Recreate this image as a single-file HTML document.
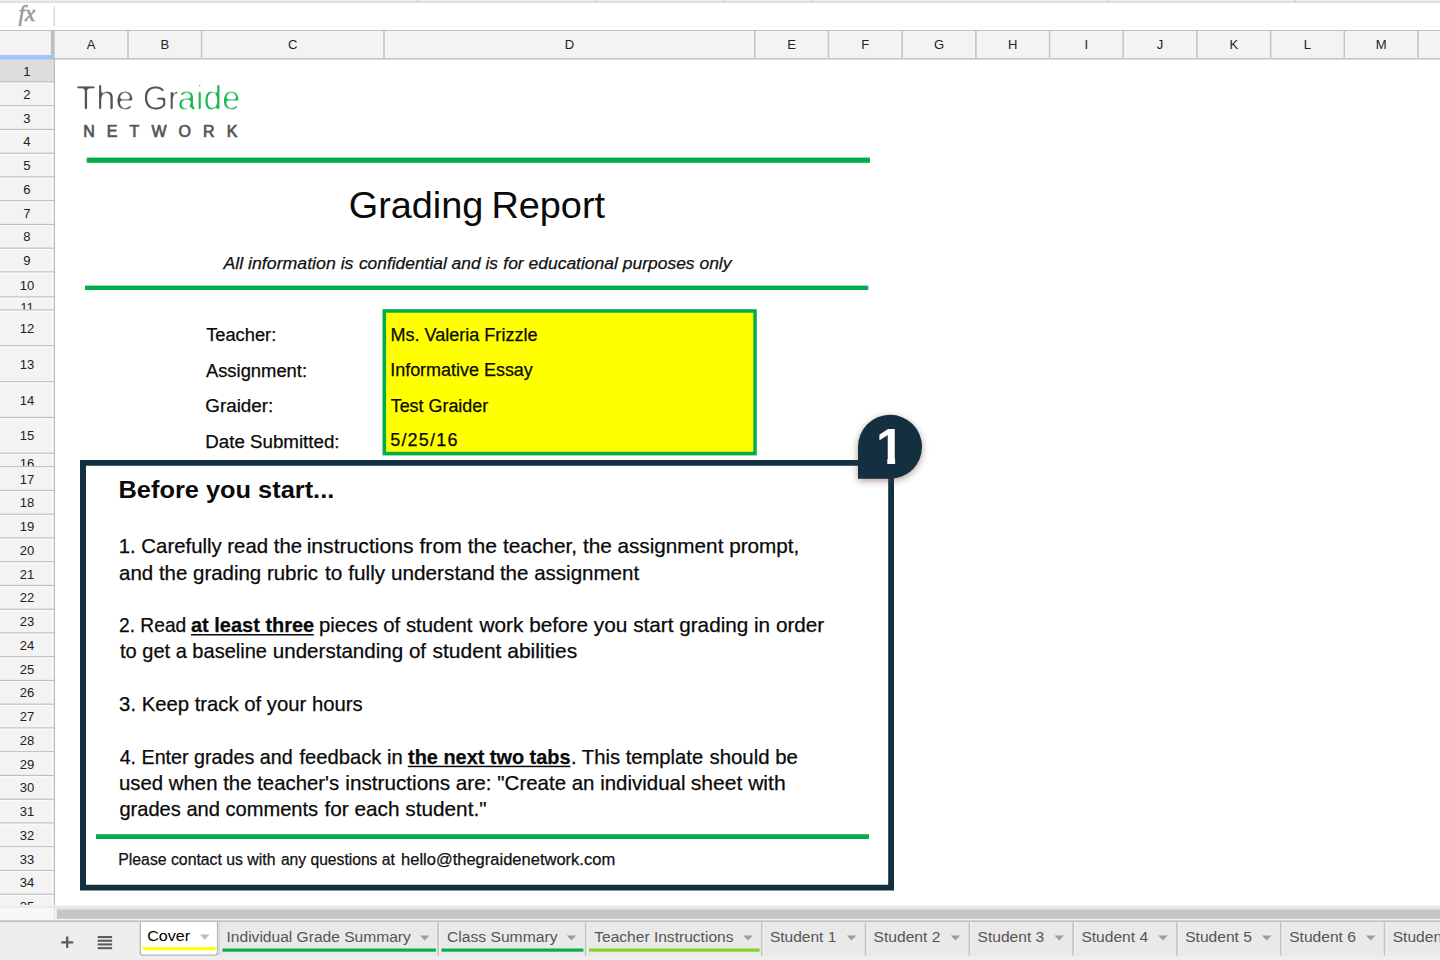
<!DOCTYPE html>
<html lang="en"><head><meta charset="utf-8"><title>Grading Report - Cover</title>
<style>html,body{margin:0;padding:0;background:#fff;overflow:hidden}body{width:1440px;height:960px;position:relative}body>svg{position:absolute;left:0;top:0;display:block}svg{font-family:'Liberation Sans', sans-serif}text{white-space:pre}</style></head><body>
<svg width="1440" height="960" viewBox="0 0 1440 960">
<defs><filter id="sh" x="-40%" y="-40%" width="180%" height="180%" color-interpolation-filters="sRGB"><feGaussianBlur in="SourceAlpha" stdDeviation="3.6"/><feOffset dx="0" dy="2"/><feColorMatrix type="matrix" values="0 0 0 0 0.36  0 0 0 0 0.20  0 0 0 0 0.16  0 0 0 0.5 0"/><feMerge><feMergeNode/><feMergeNode in="SourceGraphic"/></feMerge></filter><filter id="thin" x="-5%" y="-20%" width="110%" height="140%" color-interpolation-filters="sRGB"><feGaussianBlur stdDeviation="0.8"/><feComponentTransfer><feFuncA type="linear" slope="4" intercept="-2.0"/></feComponentTransfer></filter></defs>
<rect width="1440" height="960" fill="#fff"/>
<rect x="0" y="0" width="1440" height="2.6" fill="#ececec"/>
<rect x="0" y="1.6" width="1440" height="1.1" fill="#d6d6d6"/>
<rect x="416.59999999999997" y="0" width="1.2" height="1.8" fill="#cfcfcf"/>
<rect x="595.4" y="0" width="1.2" height="1.8" fill="#cfcfcf"/>
<rect x="724.4" y="0" width="1.2" height="1.8" fill="#cfcfcf"/>
<rect x="811.1" y="0" width="1.2" height="1.8" fill="#cfcfcf"/>
<rect x="1108.4" y="0" width="1.2" height="1.8" fill="#cfcfcf"/>
<rect x="1294.4" y="0" width="1.2" height="1.8" fill="#cfcfcf"/>
<text x="18.6" y="20.8" font-family="'Liberation Serif', serif" font-style="italic" font-size="23.4" fill="#999" stroke="#999" stroke-width="0.6" textLength="16.6" lengthAdjust="spacingAndGlyphs">fx</text>
<rect x="53.6" y="6.2" width="1.2" height="20.2" fill="#d0d0d0"/>
<rect x="0" y="30" width="1440" height="29" fill="#f3f3f3"/>
<rect x="0" y="30" width="1440" height="1.25" fill="#bebebe"/>
<rect x="0" y="31.25" width="1440" height="1" fill="#fafafa"/>
<rect x="54" y="58.1" width="1386" height="1.4" fill="#bebebe"/>
<text x="91.20" y="49.2" font-size="13.06" fill="#222" text-anchor="middle">A</text>
<rect x="126.50" y="31.25" width="3" height="26.9" fill="#fafafa"/>
<rect x="127.15" y="31" width="1.7" height="27.2" fill="#c4c4c4"/>
<text x="164.80" y="49.2" font-size="13.06" fill="#222" text-anchor="middle">B</text>
<rect x="200.10" y="31.25" width="3" height="26.9" fill="#fafafa"/>
<rect x="200.75" y="31" width="1.7" height="27.2" fill="#c4c4c4"/>
<text x="292.80" y="49.2" font-size="13.06" fill="#222" text-anchor="middle">C</text>
<rect x="382.50" y="31.25" width="3" height="26.9" fill="#fafafa"/>
<rect x="383.15" y="31" width="1.7" height="27.2" fill="#c4c4c4"/>
<text x="569.40" y="49.2" font-size="13.06" fill="#222" text-anchor="middle">D</text>
<rect x="753.30" y="31.25" width="3" height="26.9" fill="#fafafa"/>
<rect x="753.95" y="31" width="1.7" height="27.2" fill="#c4c4c4"/>
<text x="791.65" y="49.2" font-size="13.06" fill="#222" text-anchor="middle">E</text>
<rect x="827.00" y="31.25" width="3" height="26.9" fill="#fafafa"/>
<rect x="827.65" y="31" width="1.7" height="27.2" fill="#c4c4c4"/>
<text x="865.35" y="49.2" font-size="13.06" fill="#222" text-anchor="middle">F</text>
<rect x="900.70" y="31.25" width="3" height="26.9" fill="#fafafa"/>
<rect x="901.35" y="31" width="1.7" height="27.2" fill="#c4c4c4"/>
<text x="939.05" y="49.2" font-size="13.06" fill="#222" text-anchor="middle">G</text>
<rect x="974.40" y="31.25" width="3" height="26.9" fill="#fafafa"/>
<rect x="975.05" y="31" width="1.7" height="27.2" fill="#c4c4c4"/>
<text x="1012.75" y="49.2" font-size="13.06" fill="#222" text-anchor="middle">H</text>
<rect x="1048.10" y="31.25" width="3" height="26.9" fill="#fafafa"/>
<rect x="1048.75" y="31" width="1.7" height="27.2" fill="#c4c4c4"/>
<text x="1086.40" y="49.2" font-size="13.06" fill="#222" text-anchor="middle">I</text>
<rect x="1121.70" y="31.25" width="3" height="26.9" fill="#fafafa"/>
<rect x="1122.35" y="31" width="1.7" height="27.2" fill="#c4c4c4"/>
<text x="1160.05" y="49.2" font-size="13.06" fill="#222" text-anchor="middle">J</text>
<rect x="1195.40" y="31.25" width="3" height="26.9" fill="#fafafa"/>
<rect x="1196.05" y="31" width="1.7" height="27.2" fill="#c4c4c4"/>
<text x="1233.75" y="49.2" font-size="13.06" fill="#222" text-anchor="middle">K</text>
<rect x="1269.10" y="31.25" width="3" height="26.9" fill="#fafafa"/>
<rect x="1269.75" y="31" width="1.7" height="27.2" fill="#c4c4c4"/>
<text x="1307.45" y="49.2" font-size="13.06" fill="#222" text-anchor="middle">L</text>
<rect x="1342.80" y="31.25" width="3" height="26.9" fill="#fafafa"/>
<rect x="1343.45" y="31" width="1.7" height="27.2" fill="#c4c4c4"/>
<text x="1381.15" y="49.2" font-size="13.06" fill="#222" text-anchor="middle">M</text>
<rect x="1416.50" y="31.25" width="3" height="26.9" fill="#fafafa"/>
<rect x="1417.15" y="31" width="1.7" height="27.2" fill="#c4c4c4"/>
<rect x="0" y="59" width="54" height="846.5" fill="#f3f3f3"/>
<rect x="0" y="59.5" width="54" height="22.5" fill="#dddddd"/>
<rect x="51.9" y="59.5" width="2" height="22.5" fill="#e2e2e2"/>
<rect x="51.9" y="82.6" width="1.9" height="823" fill="#fbfbfb"/>
<svg x="0" y="59.50" width="54" height="22.50" overflow="hidden"><text x="27" y="16.25" font-size="13.06" fill="#222" text-anchor="middle">1</text></svg>
<rect x="0" y="81.35" width="54" height="1.3" fill="#bfbfbf"/>
<rect x="0" y="82.65" width="53.6" height="1.1" fill="#fcfcfc"/>
<svg x="0" y="82.00" width="54" height="23.75" overflow="hidden"><text x="27" y="16.88" font-size="13.06" fill="#222" text-anchor="middle">2</text></svg>
<rect x="0" y="105.10" width="54" height="1.3" fill="#bfbfbf"/>
<rect x="0" y="106.40" width="53.6" height="1.1" fill="#fcfcfc"/>
<svg x="0" y="105.75" width="54" height="23.75" overflow="hidden"><text x="27" y="16.88" font-size="13.06" fill="#222" text-anchor="middle">3</text></svg>
<rect x="0" y="128.85" width="54" height="1.3" fill="#bfbfbf"/>
<rect x="0" y="130.15" width="53.6" height="1.1" fill="#fcfcfc"/>
<svg x="0" y="129.50" width="54" height="23.75" overflow="hidden"><text x="27" y="16.88" font-size="13.06" fill="#222" text-anchor="middle">4</text></svg>
<rect x="0" y="152.60" width="54" height="1.3" fill="#bfbfbf"/>
<rect x="0" y="153.90" width="53.6" height="1.1" fill="#fcfcfc"/>
<svg x="0" y="153.25" width="54" height="23.75" overflow="hidden"><text x="27" y="16.88" font-size="13.06" fill="#222" text-anchor="middle">5</text></svg>
<rect x="0" y="176.35" width="54" height="1.3" fill="#bfbfbf"/>
<rect x="0" y="177.65" width="53.6" height="1.1" fill="#fcfcfc"/>
<svg x="0" y="177.00" width="54" height="23.75" overflow="hidden"><text x="27" y="16.88" font-size="13.06" fill="#222" text-anchor="middle">6</text></svg>
<rect x="0" y="200.10" width="54" height="1.3" fill="#bfbfbf"/>
<rect x="0" y="201.40" width="53.6" height="1.1" fill="#fcfcfc"/>
<svg x="0" y="200.75" width="54" height="23.75" overflow="hidden"><text x="27" y="16.88" font-size="13.06" fill="#222" text-anchor="middle">7</text></svg>
<rect x="0" y="223.85" width="54" height="1.3" fill="#bfbfbf"/>
<rect x="0" y="225.15" width="53.6" height="1.1" fill="#fcfcfc"/>
<svg x="0" y="224.50" width="54" height="23.75" overflow="hidden"><text x="27" y="16.88" font-size="13.06" fill="#222" text-anchor="middle">8</text></svg>
<rect x="0" y="247.60" width="54" height="1.3" fill="#bfbfbf"/>
<rect x="0" y="248.90" width="53.6" height="1.1" fill="#fcfcfc"/>
<svg x="0" y="248.25" width="54" height="23.75" overflow="hidden"><text x="27" y="16.88" font-size="13.06" fill="#222" text-anchor="middle">9</text></svg>
<rect x="0" y="271.35" width="54" height="1.3" fill="#bfbfbf"/>
<rect x="0" y="272.65" width="53.6" height="1.1" fill="#fcfcfc"/>
<svg x="0" y="272.00" width="54" height="25.00" overflow="hidden"><text x="27" y="17.50" font-size="13.06" fill="#222" text-anchor="middle">10</text></svg>
<rect x="0" y="296.35" width="54" height="1.3" fill="#bfbfbf"/>
<rect x="0" y="297.65" width="53.6" height="1.1" fill="#fcfcfc"/>
<svg x="0" y="297.00" width="54" height="13.00" overflow="hidden"><text x="27" y="14.80" font-size="13.06" fill="#222" text-anchor="middle">11</text></svg>
<rect x="0" y="309.35" width="54" height="1.3" fill="#bfbfbf"/>
<rect x="0" y="310.65" width="53.6" height="1.1" fill="#fcfcfc"/>
<svg x="0" y="310.00" width="54" height="35.75" overflow="hidden"><text x="27" y="22.88" font-size="13.06" fill="#222" text-anchor="middle">12</text></svg>
<rect x="0" y="345.10" width="54" height="1.3" fill="#bfbfbf"/>
<rect x="0" y="346.40" width="53.6" height="1.1" fill="#fcfcfc"/>
<svg x="0" y="345.75" width="54" height="36.00" overflow="hidden"><text x="27" y="23.00" font-size="13.06" fill="#222" text-anchor="middle">13</text></svg>
<rect x="0" y="381.10" width="54" height="1.3" fill="#bfbfbf"/>
<rect x="0" y="382.40" width="53.6" height="1.1" fill="#fcfcfc"/>
<svg x="0" y="381.75" width="54" height="35.75" overflow="hidden"><text x="27" y="22.88" font-size="13.06" fill="#222" text-anchor="middle">14</text></svg>
<rect x="0" y="416.85" width="54" height="1.3" fill="#bfbfbf"/>
<rect x="0" y="418.15" width="53.6" height="1.1" fill="#fcfcfc"/>
<svg x="0" y="417.50" width="54" height="35.75" overflow="hidden"><text x="27" y="22.88" font-size="13.06" fill="#222" text-anchor="middle">15</text></svg>
<rect x="0" y="452.60" width="54" height="1.3" fill="#bfbfbf"/>
<rect x="0" y="453.90" width="53.6" height="1.1" fill="#fcfcfc"/>
<svg x="0" y="453.25" width="54" height="13.50" overflow="hidden"><text x="27" y="14.80" font-size="13.06" fill="#222" text-anchor="middle">16</text></svg>
<rect x="0" y="466.10" width="54" height="1.3" fill="#bfbfbf"/>
<rect x="0" y="467.40" width="53.6" height="1.1" fill="#fcfcfc"/>
<svg x="0" y="466.75" width="54" height="23.75" overflow="hidden"><text x="27" y="16.88" font-size="13.06" fill="#222" text-anchor="middle">17</text></svg>
<rect x="0" y="489.85" width="54" height="1.3" fill="#bfbfbf"/>
<rect x="0" y="491.15" width="53.6" height="1.1" fill="#fcfcfc"/>
<svg x="0" y="490.50" width="54" height="23.75" overflow="hidden"><text x="27" y="16.88" font-size="13.06" fill="#222" text-anchor="middle">18</text></svg>
<rect x="0" y="513.60" width="54" height="1.3" fill="#bfbfbf"/>
<rect x="0" y="514.90" width="53.6" height="1.1" fill="#fcfcfc"/>
<svg x="0" y="514.25" width="54" height="23.75" overflow="hidden"><text x="27" y="16.88" font-size="13.06" fill="#222" text-anchor="middle">19</text></svg>
<rect x="0" y="537.35" width="54" height="1.3" fill="#bfbfbf"/>
<rect x="0" y="538.65" width="53.6" height="1.1" fill="#fcfcfc"/>
<svg x="0" y="538.00" width="54" height="23.75" overflow="hidden"><text x="27" y="16.88" font-size="13.06" fill="#222" text-anchor="middle">20</text></svg>
<rect x="0" y="561.10" width="54" height="1.3" fill="#bfbfbf"/>
<rect x="0" y="562.40" width="53.6" height="1.1" fill="#fcfcfc"/>
<svg x="0" y="561.75" width="54" height="23.75" overflow="hidden"><text x="27" y="16.88" font-size="13.06" fill="#222" text-anchor="middle">21</text></svg>
<rect x="0" y="584.85" width="54" height="1.3" fill="#bfbfbf"/>
<rect x="0" y="586.15" width="53.6" height="1.1" fill="#fcfcfc"/>
<svg x="0" y="585.50" width="54" height="23.75" overflow="hidden"><text x="27" y="16.88" font-size="13.06" fill="#222" text-anchor="middle">22</text></svg>
<rect x="0" y="608.60" width="54" height="1.3" fill="#bfbfbf"/>
<rect x="0" y="609.90" width="53.6" height="1.1" fill="#fcfcfc"/>
<svg x="0" y="609.25" width="54" height="23.75" overflow="hidden"><text x="27" y="16.88" font-size="13.06" fill="#222" text-anchor="middle">23</text></svg>
<rect x="0" y="632.35" width="54" height="1.3" fill="#bfbfbf"/>
<rect x="0" y="633.65" width="53.6" height="1.1" fill="#fcfcfc"/>
<svg x="0" y="633.00" width="54" height="23.75" overflow="hidden"><text x="27" y="16.88" font-size="13.06" fill="#222" text-anchor="middle">24</text></svg>
<rect x="0" y="656.10" width="54" height="1.3" fill="#bfbfbf"/>
<rect x="0" y="657.40" width="53.6" height="1.1" fill="#fcfcfc"/>
<svg x="0" y="656.75" width="54" height="23.75" overflow="hidden"><text x="27" y="16.88" font-size="13.06" fill="#222" text-anchor="middle">25</text></svg>
<rect x="0" y="679.85" width="54" height="1.3" fill="#bfbfbf"/>
<rect x="0" y="681.15" width="53.6" height="1.1" fill="#fcfcfc"/>
<svg x="0" y="680.50" width="54" height="23.75" overflow="hidden"><text x="27" y="16.88" font-size="13.06" fill="#222" text-anchor="middle">26</text></svg>
<rect x="0" y="703.60" width="54" height="1.3" fill="#bfbfbf"/>
<rect x="0" y="704.90" width="53.6" height="1.1" fill="#fcfcfc"/>
<svg x="0" y="704.25" width="54" height="23.75" overflow="hidden"><text x="27" y="16.88" font-size="13.06" fill="#222" text-anchor="middle">27</text></svg>
<rect x="0" y="727.35" width="54" height="1.3" fill="#bfbfbf"/>
<rect x="0" y="728.65" width="53.6" height="1.1" fill="#fcfcfc"/>
<svg x="0" y="728.00" width="54" height="23.75" overflow="hidden"><text x="27" y="16.88" font-size="13.06" fill="#222" text-anchor="middle">28</text></svg>
<rect x="0" y="751.10" width="54" height="1.3" fill="#bfbfbf"/>
<rect x="0" y="752.40" width="53.6" height="1.1" fill="#fcfcfc"/>
<svg x="0" y="751.75" width="54" height="23.75" overflow="hidden"><text x="27" y="16.88" font-size="13.06" fill="#222" text-anchor="middle">29</text></svg>
<rect x="0" y="774.85" width="54" height="1.3" fill="#bfbfbf"/>
<rect x="0" y="776.15" width="53.6" height="1.1" fill="#fcfcfc"/>
<svg x="0" y="775.50" width="54" height="23.75" overflow="hidden"><text x="27" y="16.88" font-size="13.06" fill="#222" text-anchor="middle">30</text></svg>
<rect x="0" y="798.60" width="54" height="1.3" fill="#bfbfbf"/>
<rect x="0" y="799.90" width="53.6" height="1.1" fill="#fcfcfc"/>
<svg x="0" y="799.25" width="54" height="23.75" overflow="hidden"><text x="27" y="16.88" font-size="13.06" fill="#222" text-anchor="middle">31</text></svg>
<rect x="0" y="822.35" width="54" height="1.3" fill="#bfbfbf"/>
<rect x="0" y="823.65" width="53.6" height="1.1" fill="#fcfcfc"/>
<svg x="0" y="823.00" width="54" height="23.75" overflow="hidden"><text x="27" y="16.88" font-size="13.06" fill="#222" text-anchor="middle">32</text></svg>
<rect x="0" y="846.10" width="54" height="1.3" fill="#bfbfbf"/>
<rect x="0" y="847.40" width="53.6" height="1.1" fill="#fcfcfc"/>
<svg x="0" y="846.75" width="54" height="23.75" overflow="hidden"><text x="27" y="16.88" font-size="13.06" fill="#222" text-anchor="middle">33</text></svg>
<rect x="0" y="869.85" width="54" height="1.3" fill="#bfbfbf"/>
<rect x="0" y="871.15" width="53.6" height="1.1" fill="#fcfcfc"/>
<svg x="0" y="870.50" width="54" height="23.75" overflow="hidden"><text x="27" y="16.88" font-size="13.06" fill="#222" text-anchor="middle">34</text></svg>
<rect x="0" y="893.60" width="54" height="1.3" fill="#bfbfbf"/>
<rect x="0" y="894.90" width="53.6" height="1.1" fill="#fcfcfc"/>
<svg x="0" y="894.25" width="54" height="10.75" overflow="hidden"><text x="27" y="16.88" font-size="13.06" fill="#222" text-anchor="middle">35</text></svg>
<rect x="53.75" y="59" width="1.3" height="846" fill="#bdbdbd"/>
<rect x="50.9" y="31" width="3.7" height="28.5" fill="#bcbcbc"/>
<rect x="0" y="55" width="53.6" height="4.6" fill="#a3c2f7"/>
<rect x="86.7" y="157.6" width="783.3" height="5.2" fill="#04ad4b"/>
<rect x="85.0" y="285.6" width="783.3" height="4.4" fill="#04ad4b"/>
<rect x="382.5" y="309.2" width="374.3" height="146.2" fill="#04ad4b"/>
<rect x="386.1" y="312.7" width="367.2" height="139.1" fill="#ffff00"/>
<path fill="#143040" fill-rule="evenodd" d="M80 460H894V890.6H80Z M86 465.8H888.2V884.8H86Z"/>
<rect x="96" y="834.2" width="773" height="4.8" fill="#04ad4b"/>
<rect x="191.0" y="634.0" width="122.8" height="1.5" fill="#0a0a0a"/>
<rect x="407.8" y="765.7" width="162.6" height="1.5" fill="#0a0a0a"/>
<path filter="url(#sh)" fill="#143040" d="M858 478.8V447A32 32 0 1 1 890 478.8Z"/>
<text x="876.0" y="463.75" font-size="50.5" font-weight="bold" fill="#fff">1</text>
<rect x="877" y="456.6" width="10.3" height="9" fill="#143040"/>
<rect x="895.1" y="456.6" width="9" height="9" fill="#143040"/>
<text x="348.74" y="217.70" font-size="36.4" textLength="134.60" lengthAdjust="spacingAndGlyphs" fill="#0a0a0a">Grading</text>
<text x="491.40" y="217.70" font-size="36.4" textLength="113.68" lengthAdjust="spacingAndGlyphs" fill="#0a0a0a">Report</text>
<text x="223.45" y="269.30" font-size="17.4" textLength="130.05" lengthAdjust="spacingAndGlyphs" fill="#111" font-style="italic" stroke="#111" stroke-width="0.25">All information is</text>
<text x="358.88" y="269.30" font-size="17.4" textLength="139.10" lengthAdjust="spacingAndGlyphs" fill="#111" font-style="italic" stroke="#111" stroke-width="0.25">confidential and is</text>
<text x="503.29" y="269.30" font-size="17.4" textLength="228.22" lengthAdjust="spacingAndGlyphs" fill="#111" font-style="italic" stroke="#111" stroke-width="0.25">for educational purposes only</text>
<text x="206.15" y="340.80" font-size="18.0" textLength="70.11" lengthAdjust="spacingAndGlyphs" fill="#0a0a0a" stroke="#0a0a0a" stroke-width="0.25">Teacher:</text>
<text x="205.92" y="376.70" font-size="18.0" textLength="101.16" lengthAdjust="spacingAndGlyphs" fill="#0a0a0a" stroke="#0a0a0a" stroke-width="0.25">Assignment:</text>
<text x="205.31" y="412.00" font-size="18.0" textLength="68.01" lengthAdjust="spacingAndGlyphs" fill="#0a0a0a" stroke="#0a0a0a" stroke-width="0.25">Graider:</text>
<text x="205.22" y="447.50" font-size="18.0" textLength="134.37" lengthAdjust="spacingAndGlyphs" fill="#0a0a0a" stroke="#0a0a0a" stroke-width="0.25">Date Submitted:</text>
<text x="390.48" y="340.50" font-size="18.0" textLength="147.01" lengthAdjust="spacingAndGlyphs" fill="#0a0a0a" stroke="#0a0a0a" stroke-width="0.25">Ms. Valeria Frizzle</text>
<text x="390.19" y="376.30" font-size="18.0" textLength="142.63" lengthAdjust="spacingAndGlyphs" fill="#0a0a0a" stroke="#0a0a0a" stroke-width="0.25">Informative Essay</text>
<text x="390.69" y="412.00" font-size="18.0" textLength="97.55" lengthAdjust="spacingAndGlyphs" fill="#0a0a0a" stroke="#0a0a0a" stroke-width="0.25">Test Graider</text>
<text x="390.19" y="445.80" font-size="18.0" textLength="67.22" lengthAdjust="spacing" fill="#0a0a0a" stroke="#0a0a0a" stroke-width="0.25">5/25/16</text>
<text x="118.56" y="497.90" font-size="24.4" textLength="215.72" lengthAdjust="spacingAndGlyphs" fill="#0a0a0a" font-weight="bold">Before you start...</text>
<text x="118.74" y="553.30" font-size="20.4" textLength="183.30" lengthAdjust="spacingAndGlyphs" fill="#0a0a0a" stroke="#0a0a0a" stroke-width="0.25">1. Carefully read the</text>
<text x="306.65" y="553.30" font-size="20.4" textLength="190.40" lengthAdjust="spacingAndGlyphs" fill="#0a0a0a" stroke="#0a0a0a" stroke-width="0.25">instructions from the</text>
<text x="502.91" y="553.30" font-size="20.4" textLength="109.00" lengthAdjust="spacingAndGlyphs" fill="#0a0a0a" stroke="#0a0a0a" stroke-width="0.25">teacher, the</text>
<text x="617.45" y="553.30" font-size="20.4" textLength="181.95" lengthAdjust="spacingAndGlyphs" fill="#0a0a0a" stroke="#0a0a0a" stroke-width="0.25">assignment prompt,</text>
<text x="119.07" y="579.50" font-size="20.4" textLength="199.02" lengthAdjust="spacingAndGlyphs" fill="#0a0a0a" stroke="#0a0a0a" stroke-width="0.25">and the grading rubric</text>
<text x="325.10" y="579.50" font-size="20.4" textLength="169.78" lengthAdjust="spacingAndGlyphs" fill="#0a0a0a" stroke="#0a0a0a" stroke-width="0.25">to fully understand</text>
<text x="499.91" y="579.50" font-size="20.4" textLength="139.23" lengthAdjust="spacingAndGlyphs" fill="#0a0a0a" stroke="#0a0a0a" stroke-width="0.25">the assignment</text>
<text x="119.04" y="631.90" font-size="20.4" textLength="67.20" lengthAdjust="spacingAndGlyphs" fill="#0a0a0a" stroke="#0a0a0a" stroke-width="0.25">2. Read</text>
<text x="190.99" y="631.90" font-size="20.4" textLength="123.25" lengthAdjust="spacingAndGlyphs" fill="#0a0a0a" font-weight="bold" stroke="#0a0a0a" stroke-width="0.25">at least three</text>
<text x="318.98" y="631.90" font-size="20.4" textLength="153.55" lengthAdjust="spacingAndGlyphs" fill="#0a0a0a" stroke="#0a0a0a" stroke-width="0.25">pieces of student</text>
<text x="479.54" y="631.90" font-size="20.4" textLength="147.80" lengthAdjust="spacingAndGlyphs" fill="#0a0a0a" stroke="#0a0a0a" stroke-width="0.25">work before you</text>
<text x="633.21" y="631.90" font-size="20.4" textLength="191.02" lengthAdjust="spacingAndGlyphs" fill="#0a0a0a" stroke="#0a0a0a" stroke-width="0.25">start grading in order</text>
<text x="119.99" y="658.20" font-size="20.4" textLength="147.00" lengthAdjust="spacingAndGlyphs" fill="#0a0a0a" stroke="#0a0a0a" stroke-width="0.25">to get a baseline</text>
<text x="272.75" y="658.20" font-size="20.4" textLength="153.34" lengthAdjust="spacingAndGlyphs" fill="#0a0a0a" stroke="#0a0a0a" stroke-width="0.25">understanding of</text>
<text x="432.55" y="658.20" font-size="20.4" textLength="144.65" lengthAdjust="spacingAndGlyphs" fill="#0a0a0a" stroke="#0a0a0a" stroke-width="0.25">student abilities</text>
<text x="119.10" y="711.00" font-size="20.4" textLength="243.66" lengthAdjust="spacingAndGlyphs" fill="#0a0a0a" stroke="#0a0a0a" stroke-width="0.25">3. Keep track of your hours</text>
<text x="119.64" y="763.60" font-size="20.4" textLength="172.97" lengthAdjust="spacingAndGlyphs" fill="#0a0a0a" stroke="#0a0a0a" stroke-width="0.25">4. Enter grades and</text>
<text x="299.40" y="763.60" font-size="20.4" textLength="103.26" lengthAdjust="spacingAndGlyphs" fill="#0a0a0a" stroke="#0a0a0a" stroke-width="0.25">feedback in</text>
<text x="408.09" y="763.60" font-size="20.4" textLength="162.43" lengthAdjust="spacingAndGlyphs" fill="#0a0a0a" font-weight="bold" stroke="#0a0a0a" stroke-width="0.25">the next two tabs</text>
<text x="570.95" y="763.60" font-size="20.4" textLength="132.27" lengthAdjust="spacingAndGlyphs" fill="#0a0a0a" stroke="#0a0a0a" stroke-width="0.25">. This template</text>
<text x="709.47" y="763.60" font-size="20.4" textLength="88.33" lengthAdjust="spacingAndGlyphs" fill="#0a0a0a" stroke="#0a0a0a" stroke-width="0.25">should be</text>
<text x="119.00" y="790.00" font-size="20.4" textLength="220.16" lengthAdjust="spacingAndGlyphs" fill="#0a0a0a" stroke="#0a0a0a" stroke-width="0.25">used when the teacher's</text>
<text x="345.36" y="790.00" font-size="20.4" textLength="146.16" lengthAdjust="spacingAndGlyphs" fill="#0a0a0a" stroke="#0a0a0a" stroke-width="0.25">instructions are:</text>
<text x="497.36" y="790.00" font-size="20.4" textLength="188.10" lengthAdjust="spacingAndGlyphs" fill="#0a0a0a" stroke="#0a0a0a" stroke-width="0.25">&quot;Create an individual</text>
<text x="690.65" y="790.00" font-size="20.4" textLength="95.03" lengthAdjust="spacingAndGlyphs" fill="#0a0a0a" stroke="#0a0a0a" stroke-width="0.25">sheet with</text>
<text x="119.41" y="816.30" font-size="20.4" textLength="198.76" lengthAdjust="spacingAndGlyphs" fill="#0a0a0a" stroke="#0a0a0a" stroke-width="0.25">grades and comments</text>
<text x="324.40" y="816.30" font-size="20.4" textLength="162.17" lengthAdjust="spacingAndGlyphs" fill="#0a0a0a" stroke="#0a0a0a" stroke-width="0.25">for each student.&quot;</text>
<text x="118.29" y="864.80" font-size="15.8" textLength="157.17" lengthAdjust="spacingAndGlyphs" fill="#111" stroke="#111" stroke-width="0.25">Please contact us with</text>
<text x="280.93" y="864.80" font-size="15.8" textLength="113.87" lengthAdjust="spacingAndGlyphs" fill="#111" stroke="#111" stroke-width="0.25">any questions at</text>
<text x="401.03" y="864.80" font-size="15.8" textLength="214.12" lengthAdjust="spacingAndGlyphs" fill="#111" stroke="#111" stroke-width="0.25">hello@thegraidenetwork.com</text>
<text x="75.44" y="110.00" font-size="34.5" textLength="59.04" lengthAdjust="spacingAndGlyphs" fill="#555" filter="url(#thin)">The</text>
<text x="142.75" y="110.00" font-size="34.5" textLength="36.19" lengthAdjust="spacingAndGlyphs" fill="#555" filter="url(#thin)">Gr</text>
<text x="177.47" y="110.00" font-size="34.5" textLength="63.01" lengthAdjust="spacingAndGlyphs" fill="#1db954" filter="url(#thin)">aide</text>
<text x="83.22" y="137.20" font-size="16.0" textLength="154.18" lengthAdjust="spacing" fill="#555" stroke="#555" stroke-width="0.7">NETWORK</text>
<rect x="0" y="905" width="1440" height="55" fill="#fff"/>
<rect x="0" y="905" width="1440" height="1.4" fill="#f2f2f2"/>
<rect x="0" y="906.2" width="1440" height="3.2" fill="#e6e6e6"/>
<rect x="0" y="907.6" width="54" height="12.4" fill="#f8f8f8"/>
<rect x="53.8" y="907" width="1.2" height="13" fill="#e2e2e2"/>
<rect x="55" y="909" width="1.8" height="10" fill="#f4f4f4"/>
<rect x="56.8" y="909.3" width="1383.2" height="9.6" fill="#c6c6c6"/>
<rect x="0" y="918.9" width="1440" height="1.6" fill="#f4f4f4"/>
<rect x="0" y="920.3" width="1440" height="2.2" fill="#c2c2c2"/>
<rect x="0" y="922.3" width="1440" height="37.7" fill="#eeeeee"/>
<rect x="219" y="922.3" width="1221" height="33.2" fill="#e9e9e9"/>
<path d="M61.2 942.3H73.2M67.2 936.6V948.1" stroke="#5c5c5c" stroke-width="2.3" fill="none"/>
<rect x="97.7" y="936.0" width="14.4" height="2.1" fill="#5c5c5c"/>
<rect x="97.7" y="939.7" width="14.4" height="2.1" fill="#5c5c5c"/>
<rect x="97.7" y="943.4" width="14.4" height="2.1" fill="#5c5c5c"/>
<rect x="97.7" y="947.1" width="14.4" height="2.1" fill="#5c5c5c"/>
<path d="M140.3 922.3V952.6Q140.3 955.2 142.9 955.2H214.9Q217.5 955.2 217.5 952.6V922.3Z" fill="#fff"/>
<path d="M140.3 922.3V952.6Q140.3 955.2 142.9 955.2H214.9Q217.5 955.2 217.5 952.6V922.3" fill="none" stroke="#b2b2b2" stroke-width="1.2"/>
<rect x="142.9" y="947.2" width="72.6" height="3" fill="#ffff00"/>
<text x="147.20" y="940.9" font-size="15.44" fill="#000" textLength="42.90" lengthAdjust="spacingAndGlyphs">Cover</text>
<path d="M200.0 934.6H209.4L204.7 939.7Z" fill="#bdbdbd"/>
<rect x="437.40" y="922.3" width="1.7" height="33.2" fill="#c2c2c2"/>
<rect x="439.10" y="922.3" width="1.1" height="33.2" fill="#f2f2f2"/>
<rect x="222.50" y="948.5" width="213.40" height="3.2" fill="#08ae4e"/>
<text x="226.50" y="941.9" font-size="15.44" fill="#555" textLength="184.30" lengthAdjust="spacingAndGlyphs">Individual Grade Summary</text>
<path d="M420.0 935.4H429.4L424.7 940.5Z" fill="#9d9d9d"/>
<rect x="584.90" y="922.3" width="1.7" height="33.2" fill="#c2c2c2"/>
<rect x="586.60" y="922.3" width="1.1" height="33.2" fill="#f2f2f2"/>
<rect x="441.50" y="948.5" width="141.90" height="3.2" fill="#08ae4e"/>
<text x="446.90" y="941.9" font-size="15.44" fill="#555" textLength="110.60" lengthAdjust="spacingAndGlyphs">Class Summary</text>
<path d="M566.7 935.4H576.1L571.4000000000001 940.5Z" fill="#9d9d9d"/>
<rect x="761.00" y="922.3" width="1.7" height="33.2" fill="#c2c2c2"/>
<rect x="762.70" y="922.3" width="1.1" height="33.2" fill="#f2f2f2"/>
<rect x="589.00" y="948.5" width="170.50" height="3.2" fill="#86cf2c"/>
<text x="594.20" y="941.9" font-size="15.44" fill="#555" textLength="139.30" lengthAdjust="spacingAndGlyphs">Teacher Instructions</text>
<path d="M743.3 935.4H752.6999999999999L748.0 940.5Z" fill="#9d9d9d"/>
<rect x="864.80" y="922.3" width="1.7" height="33.2" fill="#c2c2c2"/>
<rect x="866.50" y="922.3" width="1.1" height="33.2" fill="#f2f2f2"/>
<text x="769.90" y="941.9" font-size="15.44" fill="#555" textLength="66.50" lengthAdjust="spacingAndGlyphs">Student 1</text>
<path d="M846.8 935.4H856.1999999999999L851.5 940.5Z" fill="#9d9d9d"/>
<rect x="968.60" y="922.3" width="1.7" height="33.2" fill="#c2c2c2"/>
<rect x="970.30" y="922.3" width="1.1" height="33.2" fill="#f2f2f2"/>
<text x="873.50" y="941.9" font-size="15.44" fill="#555" textLength="66.90" lengthAdjust="spacingAndGlyphs">Student 2</text>
<path d="M950.7 935.4H960.1L955.4000000000001 940.5Z" fill="#9d9d9d"/>
<rect x="1072.40" y="922.3" width="1.7" height="33.2" fill="#c2c2c2"/>
<rect x="1074.10" y="922.3" width="1.1" height="33.2" fill="#f2f2f2"/>
<text x="977.50" y="941.9" font-size="15.44" fill="#555" textLength="66.70" lengthAdjust="spacingAndGlyphs">Student 3</text>
<path d="M1054.5 935.4H1063.9L1059.2 940.5Z" fill="#9d9d9d"/>
<rect x="1176.20" y="922.3" width="1.7" height="33.2" fill="#c2c2c2"/>
<rect x="1177.90" y="922.3" width="1.1" height="33.2" fill="#f2f2f2"/>
<text x="1081.40" y="941.9" font-size="15.44" fill="#555" textLength="66.70" lengthAdjust="spacingAndGlyphs">Student 4</text>
<path d="M1158.3 935.4H1167.7L1163.0 940.5Z" fill="#9d9d9d"/>
<rect x="1280.00" y="922.3" width="1.7" height="33.2" fill="#c2c2c2"/>
<rect x="1281.70" y="922.3" width="1.1" height="33.2" fill="#f2f2f2"/>
<text x="1185.20" y="941.9" font-size="15.44" fill="#555" textLength="66.70" lengthAdjust="spacingAndGlyphs">Student 5</text>
<path d="M1262.0 935.4H1271.4L1266.7 940.5Z" fill="#9d9d9d"/>
<rect x="1383.80" y="922.3" width="1.7" height="33.2" fill="#c2c2c2"/>
<rect x="1385.50" y="922.3" width="1.1" height="33.2" fill="#f2f2f2"/>
<text x="1289.20" y="941.9" font-size="15.44" fill="#555" textLength="66.70" lengthAdjust="spacingAndGlyphs">Student 6</text>
<path d="M1366.0 935.4H1375.4L1370.7 940.5Z" fill="#9d9d9d"/>
<rect x="1487.60" y="922.3" width="1.7" height="33.2" fill="#c2c2c2"/>
<rect x="1489.30" y="922.3" width="1.1" height="33.2" fill="#f2f2f2"/>
<text x="1392.70" y="941.9" font-size="15.44" fill="#555" textLength="66.70" lengthAdjust="spacingAndGlyphs">Student 7</text>
<path d="M1470.0 935.4H1479.4L1474.7 940.5Z" fill="#9d9d9d"/>
<rect x="218.6" y="922.3" width="1.2" height="33.2" fill="#d2d2d2"/>
</svg></body></html>
